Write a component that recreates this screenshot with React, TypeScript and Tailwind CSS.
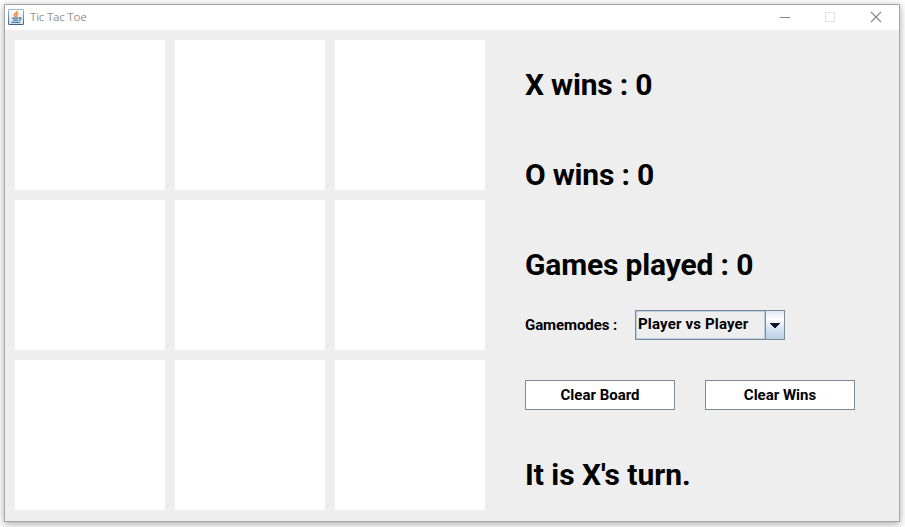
import React from 'react';

function JavaIcon() {
  return (
    <svg width="16" height="16" viewBox="0 0 16 16" fill="none" className="block">
      <defs>
        <linearGradient id="tile" x1="0" y1="0" x2="0" y2="1">
          <stop offset="0" stopColor="#ffffff" />
          <stop offset="1" stopColor="#d3dfec" />
        </linearGradient>
        <linearGradient id="edge" x1="0" y1="0" x2="0" y2="1">
          <stop offset="0" stopColor="#9db9cf" />
          <stop offset="1" stopColor="#3f6388" />
        </linearGradient>
      </defs>
      <rect x="0.5" y="0.5" width="15" height="15" rx="0.5" fill="url(#tile)" stroke="url(#edge)" />
      <path d="M9 2C9.9 4 5.9 4.6 6.4 6.2C6.6 6.9 7.2 7.3 7.6 8" stroke="#e0822f" strokeWidth="1.4" />
      <path d="M10.6 4.2C8.2 5 8.4 5.9 8.9 6.6C9.2 7.1 8.9 7.6 8.4 8" stroke="#e0822f" strokeWidth="1.2" />
      <path d="M4 9.2H10.8M5 11.2H10.2M3.4 13.4H11.8" stroke="#46789f" strokeWidth="1.2" />
      <path d="M11 8.8C13.6 8.2 13.6 10.9 11 11.3" stroke="#46789f" strokeWidth="1.2" />
    </svg>
  );
}

function TitleBar() {
  return (
    <header className="flex h-[25px] items-center bg-white pl-[3px]">
      <div className="-mt-px">
        <JavaIcon />
      </div>
      <span className="-mt-px ml-[6px] flex-1 font-['Open_Sans',sans-serif] text-[11.5px] leading-4 tracking-[-0.2px] text-[#929292]">
        Tic Tac Toe
      </span>
      <svg width="119" height="25" viewBox="0 0 119 25" fill="none">
        <path d="M0 12.5H10" stroke="#8b8b8b" shapeRendering="crispEdges" />
        <rect x="45.5" y="7.5" width="9" height="9" stroke="#e3e3e3" shapeRendering="crispEdges" />
        <path d="M91 7L101 17M101 7L91 17" stroke="#858585" strokeWidth="1.1" />
      </svg>
    </header>
  );
}

function Heading({ children, className = '' }: { children: React.ReactNode; className?: string }) {
  return (
    <h2 className={`h-[30px] text-[30px] leading-[30px] font-bold whitespace-pre ${className}`}>
      {children}
    </h2>
  );
}

function ActionButton({ children }: { children: React.ReactNode }) {
  return (
    <button className="h-[30px] w-[150px] border border-[#7a8a99] bg-white text-[15px] leading-[28px] font-bold">
      {children}
    </button>
  );
}

export default function App() {
  return (
    <main className="h-[527px] w-[905px] overflow-hidden bg-white p-1">
      <div className="h-[518px] w-[896px] border border-[#a5a5a5] bg-[#eeeeee] shadow-[0_2px_8px_rgba(0,0,0,0.35)]">
        <TitleBar />
        <div className="flex pt-[10px] pl-[10px] font-['Roboto',sans-serif] text-black">
          <div className="grid grid-cols-[150px_150px_150px] grid-rows-[150px_150px_150px] gap-[10px]">
            {Array.from({ length: 9 }, (_, i) => (
              <button key={i} className="bg-white" />
            ))}
          </div>
          <section className="ml-10 flex flex-col pt-[30px]">
            <Heading className="tracking-[-0.2px]">X wins : 0</Heading>
            <Heading className="mt-[60px] tracking-[-0.2px]">O wins : 0</Heading>
            <Heading className="mt-[60px] tracking-[-0.16px]">Games played : 0</Heading>
            <div className="mt-[30px] flex h-[30px] items-center">
              <span className="w-[110px] text-[15px] leading-[30px] font-bold tracking-[-0.08px]">Gamemodes :</span>
              <div className="flex h-[30px] w-[150px] border border-[#7a8a99]">
                <div className="w-[129px] border border-[#b8cfe5] pl-px text-[15px] leading-[24px] font-bold tracking-[0.16px] whitespace-nowrap">
                  Player vs Player
                </div>
                <div className="flex flex-1 items-center justify-center border-l border-[#7a8a99] bg-[linear-gradient(to_bottom,#dde8f3_0%,#ffffff_30%,#dde8f3_55%,#b8cfe5_100%)]">
                  <svg width="10" height="5" viewBox="0 0 10 5" className="mr-px" shapeRendering="crispEdges">
                    <path d="M0 0H10V1H9V2H8V3H7V4H6V5H4V4H3V3H2V2H1V1H0Z" fill="#10142f" />
                  </svg>
                </div>
              </div>
            </div>
            <div className="mt-10 flex gap-[30px]">
              <ActionButton>Clear Board</ActionButton>
              <ActionButton>Clear Wins</ActionButton>
            </div>
            <Heading className="mt-[50px] tracking-[-0.03px]">It is X's turn.</Heading>
          </section>
        </div>
      </div>
    </main>
  );
}
